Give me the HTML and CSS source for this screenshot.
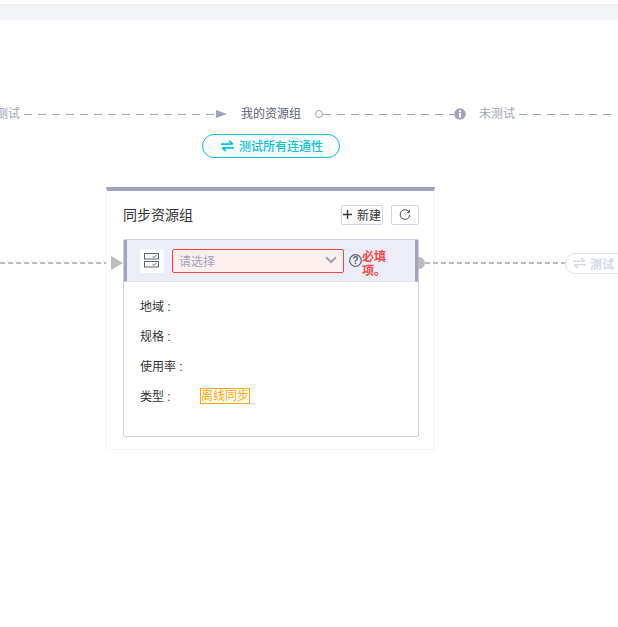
FILE: index.html
```html
<!DOCTYPE html>
<html lang="zh">
<head>
<meta charset="utf-8">
<title>同步资源组</title>
<link rel="stylesheet" href="styles.css">
</head>
<body>
<div class="topbar"></div>
<main class="canvas">
  <div class="stage-row">
    <span class="stage-text muted clip-left">测试</span>
    <span class="dash dash-a"></span>
    <svg class="arrow" width="11" height="8" viewBox="0 0 11 8"><path d="M0 0L11 4L0 8Z" fill="#a0a3bd"/></svg>
    <span class="stage-text name">我的资源组</span>
    <span class="ring"></span>
    <span class="dash dash-b"></span>
    <svg class="info" width="12" height="12" viewBox="0 0 12 12"><circle cx="6" cy="6" r="5.8" fill="#a0a3bd"/><rect x="5" y="2.4" width="2" height="1.8" fill="#fff"/><rect x="5" y="5" width="2" height="4.6" fill="#fff"/></svg>
    <span class="stage-text muted untested">未测试</span>
    <span class="dash dash-c"></span>
  </div>

  <button class="test-all" type="button">
    <svg width="13" height="12" viewBox="0 0 13 12"><path d="M0 4.2H11.5M8 .8L11.8 4.2M13 7.8H1.5M5 11.2L1.2 7.8" fill="none" stroke="#00c1de" stroke-width="1.8"/></svg>
    <span>测试所有连通性</span>
  </button>

  <div class="link link-in"></div>

  <section class="card">
    <header class="card-head">
      <h2 class="card-title">同步资源组</h2>
      <div class="card-actions">
        <button class="btn btn-new" type="button"><svg width="9" height="9" viewBox="0 0 9 9"><path d="M4.5 0V9M0 4.5H9" stroke="#333" stroke-width="1.3"/></svg><span>新建</span></button>
        <button class="btn btn-refresh" type="button"><svg width="12" height="12" viewBox="0 0 12 12"><path d="M10.2 3.2A4.8 4.8 0 1 0 10.8 6" fill="none" stroke="#444" stroke-width="1"/><path d="M10.8 .8V3.8H7.8" fill="#444"/></svg></button>
      </div>
    </header>
    <div class="group">
      <div class="group-head">
        <span class="icon-box">
          <svg width="16" height="16" viewBox="0 0 16 16"><g fill="none" stroke="#5c6079" stroke-width="1"><rect x=".5" y=".5" width="14" height="5.5"/><rect x=".5" y="8.5" width="14" height="5.5"/><path d="M8.5 3.2L10 4.6L12.5 1.8M8.5 11.2L10 12.6L12.5 9.8"/></g></svg>
        </span>
        <div class="select">
          <span class="placeholder">请选择</span>
          <svg width="12" height="8" viewBox="0 0 12 8"><path d="M1 1.2L6 6L11 1.2" fill="none" stroke="#a0a3bd" stroke-width="2"/></svg>
        </div>
        <svg class="help" width="13" height="13" viewBox="0 0 13 13"><circle cx="6.5" cy="6.5" r="5.8" fill="none" stroke="#5c6079" stroke-width="1.2"/><text x="6.5" y="9.8" text-anchor="middle" class="help-mark">?</text></svg>
        <span class="error">必填项。</span>
      </div>
      <dl class="props">
        <div class="prop"><dt>地域 :</dt><dd></dd></div>
        <div class="prop"><dt>规格 :</dt><dd></dd></div>
        <div class="prop"><dt>使用率 :</dt><dd></dd></div>
        <div class="prop"><dt>类型 :</dt><dd><span class="tag">离线同步</span></dd></div>
      </dl>
    </div>
  </section>

  <svg class="link-arrow" width="12" height="14" viewBox="0 0 12 14"><path d="M0 0L12 7L0 14Z" fill="#bcbcbc"/></svg>
  <span class="port"></span>
  <div class="link link-out"></div>
  <div class="test-one">
    <svg width="15" height="12" viewBox="0 0 13 12"><path d="M0 4.2H11.5M8 .8L11.8 4.2M13 7.8H1.5M5 11.2L1.2 7.8" fill="none" stroke="#d5d8e6" stroke-width="1.6"/></svg>
    <span>测试</span>
  </div>
</main>
</body>
</html>
```
FILE: styles.css
```css
* { box-sizing: border-box; }
html, body { margin: 0; padding: 0; background: #fff; }
body {
  width: 618px;
  height: 627px;
  overflow: hidden;
  font-family: "Liberation Sans", "Noto Sans CJK SC", sans-serif;
  font-size: 12px;
  color: #333;
  padding-top: 4px;
}
.topbar {
  height: 16px;
  background: linear-gradient(#eeeff3, #f4f5f9 6px);
}
.canvas {
  position: relative;
  height: 607px;
  overflow: hidden;
}
.stage-row {
  position: absolute;
  left: -4px;
  top: 84px;
  width: 622px;
  height: 20px;
  display: flex;
  align-items: center;
}
.stage-text { font-size: 12px; line-height: 20px; white-space: nowrap; }
.muted { color: #a0a3bd; }
.name { color: #5c6079; margin-left: 14px; }
.clip-left { width: 24px; }
.untested { margin-left: 13px; }
.dash {
  height: 1px;
  background: repeating-linear-gradient(90deg, #a0a3bd 0 8px, transparent 8px 14px);
}
.dash-a { width: 192px; margin-left: 4px; }
.dash-b { width: 131px; }
.dash-c { width: 92px; margin-left: 4px; }
.arrow { flex: none; }
.ring {
  flex: none;
  width: 8px;
  height: 8px;
  margin-left: 14px;
  border: 1px solid #a0a3bd;
  border-radius: 50%;
}
.info { flex: none; }
.test-all {
  position: absolute;
  left: 202px;
  top: 114px;
  width: 138px;
  height: 24px;
  padding: 0 0 1px 18px;
  display: flex;
  align-items: center;
  gap: 5px;
  border: 1px solid #00c1de;
  border-radius: 12px;
  background: #fff;
  color: #00c1de;
  font: inherit;
  font-size: 12px;
  font-weight: 500;
}
.card {
  position: absolute;
  left: 106px;
  top: 167px;
  width: 329px;
  height: 263px;
  border: 1px solid #f5f5f8;
  border-top: 4px solid #a0a3bd;
  padding: 0 15px 0 16px;
  background: #fff;
}
.card-head {
  height: 48px;
  display: flex;
  align-items: center;
  justify-content: space-between;
}
.card-title { margin: 0 0 3px; font-size: 14px; font-weight: 400; color: #333; }
.card-actions { display: flex; gap: 8px; margin-bottom: 1px; }
.btn {
  height: 20px;
  padding: 0;
  display: flex;
  align-items: center;
  justify-content: center;
  background: #fff;
  border: 1px solid #d4d6e4;
  border-radius: 2px;
  font: inherit;
  color: #333;
}
.btn-new { width: 42px; gap: 5px; justify-content: flex-start; padding: 0 0 1px 1px; }
.btn-refresh { width: 28px; }
.group {
  height: 198px;
  border: 1px solid #cfd1e0;
  border-radius: 2px;
}
.group-head {
  height: 42px;
  display: flex;
  align-items: center;
  background: #ebeef6;
  border-left: 3px solid #a0a3bd;
  border-right: 3px solid #a0a3bd;
  border-bottom: 1px solid #dfe1ec;
  padding-left: 13px;
}
.icon-box {
  flex: none;
  width: 24px;
  height: 24px;
  display: flex;
  align-items: center;
  justify-content: center;
  background: #fff;
  border-radius: 2px;
}
.select {
  flex: none;
  width: 172px;
  height: 24px;
  margin-left: 8px;
  padding: 0 6px 1px 6px;
  display: flex;
  align-items: center;
  justify-content: space-between;
  background: #fff0f0;
  border: 1px solid #f44;
  border-radius: 2px;
}
.placeholder { color: #a0a3bd; font-size: 12px; }
.help { flex: none; margin-left: 5px; }
.help-mark { font-size: 10px; font-weight: 700; fill: #5c6079; }
.error {
  width: 28px;
  margin-top: 6px;
  color: #f44;
  font-size: 12px;
  font-weight: 700;
  line-height: 14px;
}
.props { margin: 0; padding: 8px 0 0 16px; }
.prop {
  height: 30px;
  display: flex;
  align-items: center;
}
.prop dt { width: 60px; font-size: 12px; color: #333; }
.prop dd { margin: 0; }
.tag {
  display: block;
  width: 50px;
  height: 16px;
  margin-top: 2px;
  border: 1px solid #ffa500;
  color: #ffa500;
  font-size: 12px;
  line-height: 15px;
  text-align: center;
  white-space: nowrap;
}
.link {
  position: absolute;
  top: 242px;
  height: 2px;
  background: repeating-linear-gradient(90deg, #bcbcbc 0 5px, transparent 5px 8px);
}
.link-in { left: 0; width: 110px; }
.link-out { left: 425px; width: 140px; }
.link-arrow { position: absolute; left: 111px; top: 236px; }
.port {
  position: absolute;
  left: 418px;
  top: 237px;
  width: 7px;
  height: 12px;
  border-radius: 0 6px 6px 0;
  background: #bcbcbc;
}
.test-one {
  position: absolute;
  left: 565px;
  top: 233px;
  width: 70px;
  height: 21px;
  padding: 0 0 1px 6px;
  display: flex;
  align-items: center;
  gap: 3px;
  border: 1px solid #e0e2ee;
  border-radius: 10px;
  background: #fff;
  color: #d5d8e6;
  font-size: 12px;
  font-weight: 700;
}
```
